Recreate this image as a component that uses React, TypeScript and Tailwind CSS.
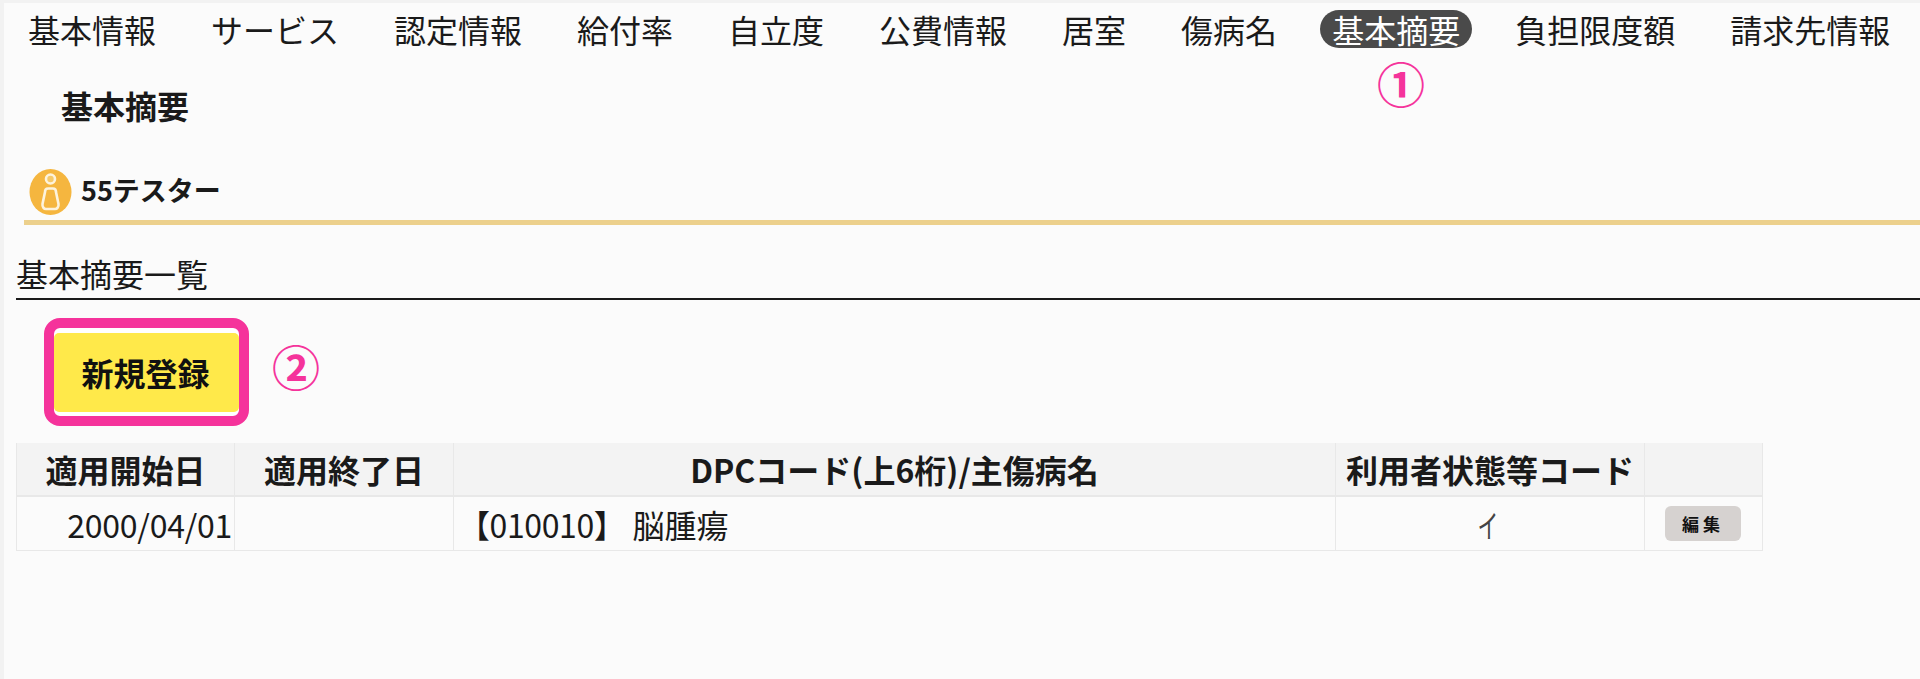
import React from "react";

const tabs = ["基本情報", "サービス", "認定情報", "給付率", "自立度", "公費情報", "居室", "傷病名", "基本摘要", "負担限度額", "請求先情報"];
const ACTIVE = "基本摘要";

const PersonIcon: React.FC = () => (
  <svg width="43" height="46" viewBox="0 0 42 46" className="shrink-0">
    <ellipse cx="21" cy="23" rx="21" ry="23" fill="#f5b63f" />
    <circle cx="21" cy="10" r="4.5" fill="#f5c96a" stroke="#fdf3dc" strokeWidth="2.6" />
    <path d="M15.5 23 C15.5 20.5 17 19.5 18.5 19.5 H23.5 C25 19.5 26.5 20.5 26.5 23 L29 35 C29.4 38 27.5 40 25.5 40 H16.5 C14.5 40 12.6 38 13 35 Z" fill="none" stroke="#fdf3dc" strokeWidth="2.6" />
  </svg>
);

export default function App() {
  return (
    <div
      className="relative h-[679px] w-full overflow-hidden border-t-[3px] border-l-[4px] border-[#f2f2f2] bg-[#fbfbfb] text-[#1a1a1a]"
      style={{ fontFamily: '"Noto Sans CJK JP", "Noto Sans", sans-serif' }}
    >
      <nav className="mt-[7px] ml-[12px] flex gap-[31px] whitespace-nowrap text-[32px] leading-[38px]">
        {tabs.map((t) => (
          <span
            key={t}
            className={t === ACTIVE ? "rounded-full bg-[#4a4a4a] px-3 text-white" : "px-3"}
          >
            {t}
          </span>
        ))}
      </nav>

      <span className="absolute top-[55px] left-[1373px] text-[48px] leading-[48px] font-bold text-[#f5339b]">①</span>

      <h1 className="mt-[37px] ml-[57px] text-[32px] leading-[40px] font-bold">基本摘要</h1>

      <div className="mt-[44px] ml-[25px] flex items-center gap-[9px]">
        <PersonIcon />
        <span className="pb-[4px] text-[27px] leading-[36px] font-bold">55テスター</span>
      </div>
      <div className="mt-[5px] ml-[20px] h-[5px] bg-[#ecd08c]" />

      <div className="mt-[28px] ml-[12px] border-b-2 border-[#1a1a1a] pb-[5px] text-[32px] leading-[40px]">基本摘要一覧</div>

      <div className="mt-[18px] ml-[40px] flex items-center gap-[23px]">
        <div className="flex h-[108px] w-[205px] items-center rounded-[16px] border-[10px] border-[#f5339b] bg-white">
          <button className="flex h-[79px] w-full items-center justify-center rounded-[5px] bg-[#ffe94a] pr-[2px] text-[32px] font-bold text-[#111]">
            新規登録
          </button>
        </div>
        <span className="-mt-[14px] text-[48px] leading-[48px] font-bold text-[#f5339b]">②</span>
      </div>

      <table className="mt-[17px] ml-[12px] w-[1746px] table-fixed border-collapse text-[32px]">
        <colgroup>
          <col className="w-[218px]" />
          <col className="w-[219px]" />
          <col className="w-[882px]" />
          <col className="w-[309px]" />
          <col className="w-[118px]" />
        </colgroup>
        <thead>
          <tr className="h-[53px] bg-[#f3f3f3] font-bold">
            {["適用開始日", "適用終了日", "DPCコード(上6桁)/主傷病名", "利用者状態等コード", ""].map((h, i) => (
              <th key={i} className="border-x border-b-2 border-[#e8e8e8] p-0 font-bold whitespace-nowrap">
                {h}
              </th>
            ))}
          </tr>
        </thead>
        <tbody>
          <tr className="h-[54px]">
            <td className="border border-[#e8e8e8] pt-[2px] pr-[2px] text-right text-[32px] tracking-[-0.25px]">2000/04/01</td>
            <td className="border border-[#e8e8e8]" />
            <td className="border border-[#e8e8e8] pt-[2px] pl-[4px]">
              <span className="tracking-[-0.4px]">【010010】</span> 脳腫瘍
            </td>
            <td className="border border-[#e8e8e8] pt-[2px] pr-[4px] text-center text-[#444]">
              <span className="inline-block scale-x-[0.65]">イ</span>
            </td>
            <td className="border border-[#e8e8e8]">
              <button className="ml-[20px] flex h-[35px] w-[76px] items-center justify-center rounded-[6px] bg-[#d6d2d0] text-[17px] font-bold tracking-[4px] text-[#111]">
                編集
              </button>
            </td>
          </tr>
        </tbody>
      </table>
    </div>
  );
}
